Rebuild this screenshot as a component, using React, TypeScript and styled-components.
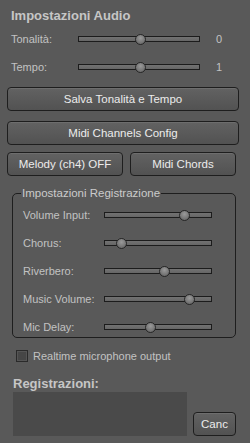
import React from 'react';
import styled, { createGlobalStyle } from 'styled-components';

const GlobalStyle = createGlobalStyle`
    html, body {
        margin: 0;
        padding: 0;
        background: #595959;
    }
    body {
        font-family: "Liberation Sans", Arial, sans-serif;
        font-size: 11px;
        color: #c2c2c2;
    }
`;

interface SliderProps {
    value: number;
    width: number;
}

const Slider: React.FC<SliderProps> = ({ value, width }) => (
    <Track $width={width}>
        <Thumb style={{ left: `${value * width}px` }} />
    </Track>
);

interface SliderRowProps {
    label: string;
    value: number;
    width: number;
    labelWidth: number;
    display?: string;
}

const SliderRow: React.FC<SliderRowProps> = ({ label, value, width, labelWidth, display }) => (
    <Row>
        <Label $width={labelWidth}>{label}</Label>
        <Slider value={value} width={width} />
        {display !== undefined && <Value>{display}</Value>}
    </Row>
);

export default function App() {
    return (
        <>
            <GlobalStyle />
            <Panel>
                <Heading>Impostazioni Audio</Heading>
                <SliderRow label="Tonalità:" value={0.508} width={122} labelWidth={67} display="0" />
                <SliderRow label="Tempo:" value={0.508} width={122} labelWidth={67} display="1" />

                <Button $top={6}>Salva Tonalità e Tempo</Button>
                <Button $top={10}>Midi Channels Config</Button>
                <ButtonRow>
                    <Button $top={0} $width={116}>Melody (ch4) OFF</Button>
                    <Button $top={0} $width={106}>Midi Chords</Button>
                </ButtonRow>

                <Group>
                    <Legend>Impostazioni Registrazione</Legend>
                    <SliderRow label="Volume Input:" value={0.74} width={108} labelWidth={81} />
                    <SliderRow label="Chorus:" value={0.15} width={108} labelWidth={81} />
                    <SliderRow label="Riverbero:" value={0.555} width={108} labelWidth={81} />
                    <SliderRow label="Music Volume:" value={0.78} width={108} labelWidth={81} />
                    <SliderRow label="Mic Delay:" value={0.42} width={108} labelWidth={81} />
                </Group>

                <CheckRow>
                    <Check />
                    <span>Realtime microphone output</span>
                </CheckRow>

                <SubHeading>Registrazioni:</SubHeading>
                <ListRow>
                    <ListBox />
                    <Button $top={0} $width={43}>Canc</Button>
                </ListRow>
            </Panel>
        </>
    );
}

const Panel = styled.div`
    width: 250px;
    height: 443px;
    box-sizing: border-box;
    padding: 6px 11px 0 7px;
    display: flex;
    flex-direction: column;
    overflow: hidden;
`;

const Heading = styled.div`
    height: 19px;
    line-height: 19px;
    padding-left: 4px;
    font-size: 13px;
    font-weight: bold;
    color: #c6c6c6;
`;

const Row = styled.div`
    display: flex;
    align-items: center;
    height: 28px;
    padding-left: 4px;
`;

const Label = styled.div<{ $width: number }>`
    width: ${(p) => p.$width}px;
    flex-shrink: 0;
`;

const Value = styled.div`
    margin-left: 16px;
`;

const Track = styled.div<{ $width: number }>`
    position: relative;
    width: ${(p) => p.$width}px;
    height: 6px;
    box-sizing: border-box;
    border: 1px solid #1c1c1c;
    background: linear-gradient(#727272, #666666);
    flex-shrink: 0;
`;

const Thumb = styled.div`
    position: absolute;
    top: 50%;
    width: 11px;
    height: 11px;
    margin: -5.5px 0 0 -5.5px;
    box-sizing: border-box;
    border-radius: 50%;
    border: 1px solid #262626;
    background: radial-gradient(circle at 50% 35%, #9a9a9a, #767676 60%, #5c5c5c);
`;

const Button = styled.div<{ $top: number; $width?: number }>`
    margin-top: ${(p) => p.$top}px;
    width: ${(p) => (p.$width ? `${p.$width}px` : 'auto')};
    height: 24px;
    box-sizing: border-box;
    border: 1px solid #1e1e1e;
    border-radius: 4px;
    background: linear-gradient(#626262, #525252);
    box-shadow: inset 0 1px 0 rgba(255, 255, 255, 0.08);
    color: #ececec;
    font-size: 11.5px;
    display: flex;
    align-items: center;
    justify-content: center;
    flex-shrink: 0;
`;

const ButtonRow = styled.div`
    display: flex;
    gap: 7px;
    margin-top: 7px;
`;

const Group = styled.div`
    position: relative;
    margin: 17px 3px 0 5px;
    height: 145px;
    box-sizing: border-box;
    border: 1px solid #1e1e1e;
    border-radius: 5px;
    padding: 7px 0 0 6px;
`;

const Legend = styled.div`
    position: absolute;
    top: -8px;
    left: 8px;
    padding: 0 1px;
    background: #595959;
    color: #cbcbcb;
    font-size: 11.5px;
    line-height: 14px;
`;

const CheckRow = styled.div`
    display: flex;
    align-items: center;
    gap: 5px;
    margin: 11px 0 0 9px;
    height: 13px;
`;

const Check = styled.div`
    width: 12px;
    height: 12px;
    box-sizing: border-box;
    border: 1px solid #2a2a2a;
    background: #464646;
    box-shadow: inset 0 0 0 1px #555;
`;

const SubHeading = styled.div`
    margin: 13px 0 0 6px;
    height: 17px;
    line-height: 17px;
    font-size: 13px;
    font-weight: bold;
    color: #c6c6c6;
`;

const ListRow = styled.div`
    display: flex;
    align-items: flex-end;
    gap: 6px;
    margin: 0 0 0 6px;
`;

const ListBox = styled.div`
    width: 174px;
    height: 44px;
    background: #4a4a4a;
`;
